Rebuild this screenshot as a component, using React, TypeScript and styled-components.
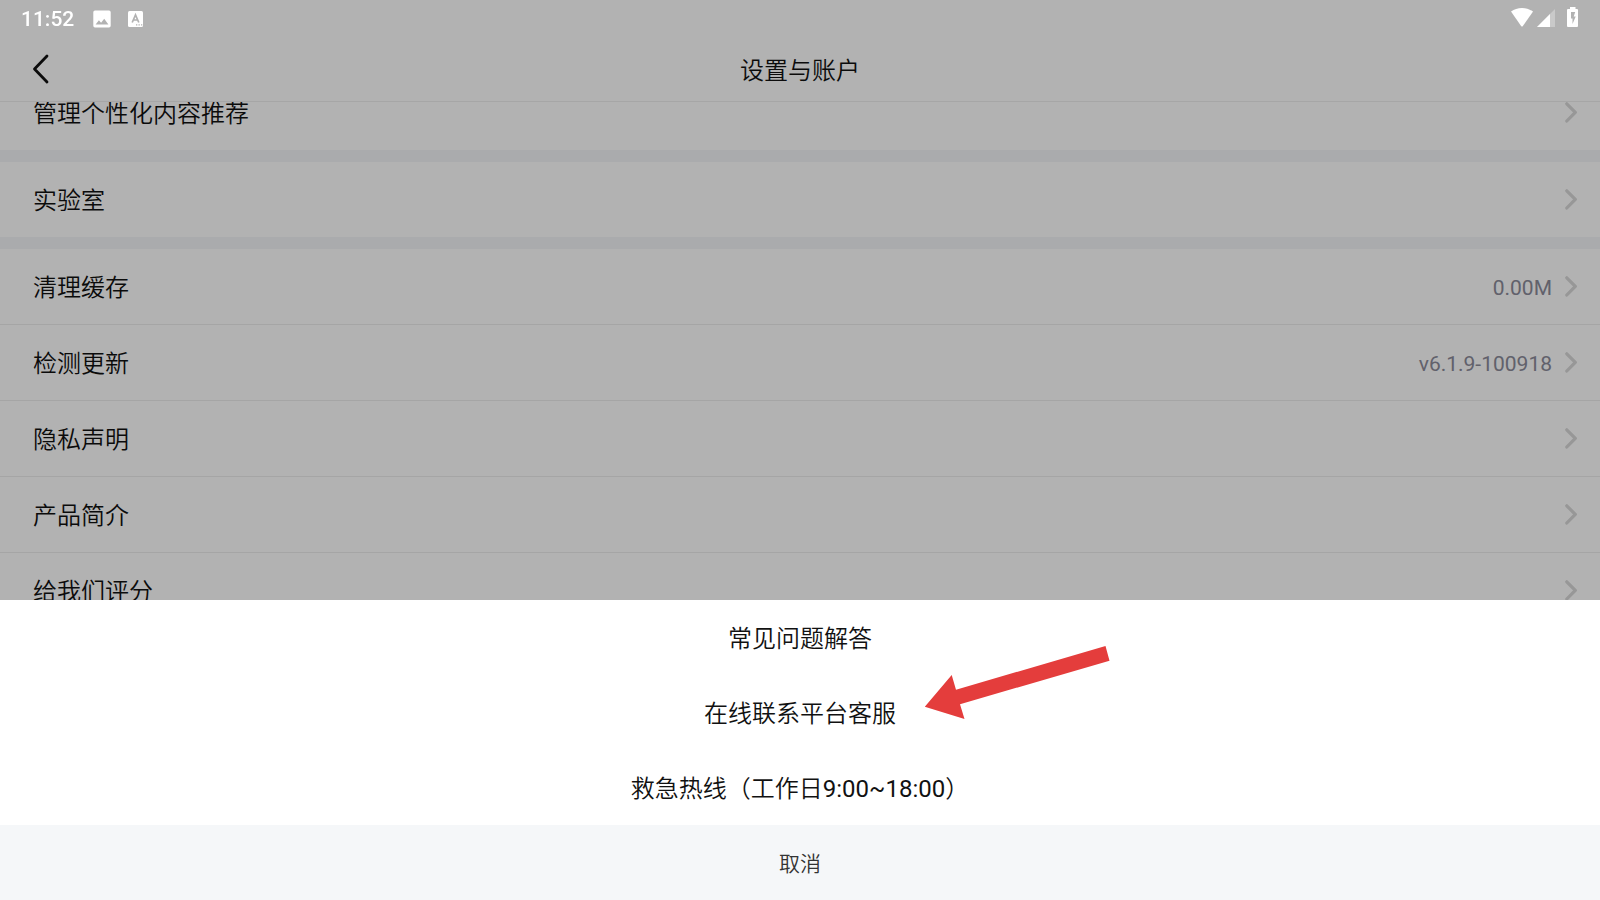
import React, { useLayoutEffect, useRef } from "react";
import styled, { createGlobalStyle } from "styled-components";

const GlobalStyle = createGlobalStyle`
  * { box-sizing: border-box; }
  body {
    margin: 0;
    background: #ffffff;
    color: #111111;
    font-family: Roboto, "Noto Sans CJK SC", sans-serif;
    font-weight: 350;
  }
  button {
    margin: 0;
    padding: 0;
    border: 0;
    background: none;
    color: inherit;
    font: inherit;
    cursor: pointer;
  }
`;

const Screen = styled.div`
  display: flex;
  flex-direction: column;
  height: 100vh;
  overflow: hidden;
`;

const StatusBar = styled.div`
  position: relative;
  z-index: 2;
  display: flex;
  justify-content: space-between;
  flex: none;
  height: 36px;
  padding: 0 22px 0 21px;
  color: #ffffff;
`;

const StatusGroup = styled.div`
  display: flex;
  align-items: center;
`;

const Notifications = styled(StatusGroup)`
  padding-top: 2px;
`;

const Indicators = styled(StatusGroup)`
  padding-bottom: 2px;
`;

const Clock = styled.time`
  margin-right: 19px;
  font-size: 21px;
  font-weight: 500;
  line-height: 34px;
`;

const Header = styled.header`
  display: grid;
  grid-template-columns: 1fr auto 1fr;
  align-items: center;
  flex: none;
  height: 66px;
  padding: 0 30px;
  border-bottom: 1px solid #eeeeee;
`;

const BackButton = styled.button`
  display: flex;
  justify-self: start;
`;

const Title = styled.h1`
  margin: 0;
  padding-top: 4px;
  font-size: 24px;
  font-weight: 350;
  line-height: 36px;
`;

const ScrollArea = styled.main`
  flex: 1;
  min-height: 0;
  padding-bottom: 300px;
  overflow-y: auto;
  scrollbar-width: none;
`;

const Group = styled.section`
  & + & {
    border-top: 12px solid #f4f5f8;
  }
`;

const Row = styled.button`
  display: flex;
  align-items: center;
  width: 100%;
  height: 75px;
  padding: 2px 22px 0 33px;
  text-align: left;
`;

const Divider = styled.hr`
  height: 1px;
  margin: 0;
  border: 0;
  background: #ececec;
`;

const RowLabel = styled.span`
  flex: 1;
  font-size: 24px;
  line-height: 36px;
`;

const RowValue = styled.span`
  margin-right: 13px;
  color: #8b8b9a;
  font-size: 21px;
  font-weight: 400;
  line-height: 36px;
`;

const Mask = styled.div`
  position: fixed;
  inset: 0;
  z-index: 1;
  background: rgba(0, 0, 0, 0.3);
`;

const Sheet = styled.div`
  position: fixed;
  right: 0;
  bottom: 0;
  left: 0;
  z-index: 3;
  display: flex;
  flex-direction: column;
  background: #ffffff;
`;

const SheetOption = styled.button<{ $cancel?: boolean }>`
  height: 75px;
  padding-top: 2px;
  background: ${(p) => (p.$cancel ? "#f5f7f9" : "#ffffff")};
  color: ${(p) => (p.$cancel ? "#333333" : "#111111")};
  font-size: ${(p) => (p.$cancel ? 21 : 24)}px;
  line-height: 36px;
`;

const Hours = styled.span`
  font-weight: 400;
`;

const Pointer = styled.svg`
  position: absolute;
  top: 46px;
  left: calc(50% + 124px);
  pointer-events: none;
`;

const StatusIcon = styled.svg<{ $gap?: number }>`
  margin-left: ${(p) => p.$gap ?? 0}px;
`;

const Chevron = () => (
  <svg width="13" height="24" viewBox="0 0 13 24" fill="none" aria-hidden="true">
    <path d="M1.800 1.800 10.300 10.400 1.800 19" stroke="#d8d8d8" strokeWidth="3.2" strokeLinecap="round" strokeLinejoin="round" />
  </svg>
);

type Item = { label: string; value?: string };

const groups: Item[][] = [
  [{ label: "管理个性化内容推荐" }],
  [{ label: "实验室" }],
  [
    { label: "清理缓存", value: "0.00M" },
    { label: "检测更新", value: "v6.1.9-100918" },
    { label: "隐私声明" },
    { label: "产品简介" },
    { label: "给我们评分" },
  ],
];

const INITIAL_SCROLL = 27;

export default function App() {
  const area = useRef<HTMLElement>(null);

  useLayoutEffect(() => {
    if (area.current) area.current.scrollTop = INITIAL_SCROLL;
  }, []);

  return (
    <Screen>
      <GlobalStyle />
      <StatusBar>
        <Notifications>
          <Clock>11:52</Clock>
          <StatusIcon width="18" height="18" viewBox="0 0 18 18" aria-hidden="true">
            <path
              fill="currentColor"
              fillRule="evenodd"
              d="M2 .5h14a1.7 1.7 0 0 1 1.7 1.7v13.6a1.7 1.7 0 0 1-1.7 1.7H2a1.7 1.7 0 0 1-1.7-1.7V2.2A1.7 1.7 0 0 1 2 .5ZM2.600 14.400h12.800l-4.200-5.700-3.100 4.100-2.200-2.600Z"
            />
          </StatusIcon>
          <StatusIcon $gap={17} width="15" height="16" viewBox="0 0 15 16" aria-hidden="true">
            <rect width="15" height="16" rx="1.5" fill="currentColor" />
            <path d="M4.200 11.500 7.500 3.800l3.300 7.700M5.300 9h4.400" fill="none" stroke="#b2b2b2" strokeWidth="1.7" />
            <path d="M8 13.300h1.300v1.300H8zM10.500 13.300h1.300v1.300h-1.300zM13 13.300h1.300v1.300H13z" fill="#b2b2b2" />
          </StatusIcon>
        </Notifications>
        <Indicators>
          <StatusIcon width="22" height="20" viewBox="0 0 22 20" aria-hidden="true">
            <path d="M0 4.600C3.200 2.200 6.800 1 11 1s7.800 1.200 11 3.600L11.900 19q-.9 1-1.800 0Z" fill="currentColor" />
          </StatusIcon>
          <StatusIcon $gap={4} width="18" height="20" viewBox="0 0 18 20" aria-hidden="true">
            <path d="M18 2v18H0Z" fill="currentColor" opacity="0.3" />
            <path d="M13 7v13H0Z" fill="currentColor" />
          </StatusIcon>
          <StatusIcon $gap={12} width="11" height="20" viewBox="0 0 11 20" aria-hidden="true">
            <path
              fill="currentColor"
              fillRule="evenodd"
              d="M3 0h5.500v2H10q1 0 1 1v16q0 1-1 1H1q-1 0-1-1V3q0-1 1-1h2ZM4 5v6.500h1.500V17l3.200-7.500H6.700L8.200 5Z"
            />
          </StatusIcon>
        </Indicators>
      </StatusBar>
      <Header>
        <BackButton aria-label="返回">
          <svg width="22" height="32" viewBox="0 0 22 32" fill="none" aria-hidden="true">
            <path d="M17 3 4.500 16 17 29" stroke="#111" strokeWidth="2.8" strokeLinecap="round" strokeLinejoin="round" />
          </svg>
        </BackButton>
        <Title>设置与账户</Title>
      </Header>
      <ScrollArea ref={area}>
        {groups.map((items) => (
          <Group key={items[0].label}>
            {items.map((item, i) => (
              <React.Fragment key={item.label}>
                {i > 0 && <Divider />}
                <Row>
                  <RowLabel>{item.label}</RowLabel>
                  {item.value && <RowValue>{item.value}</RowValue>}
                  <Chevron />
                </Row>
              </React.Fragment>
            ))}
          </Group>
        ))}
      </ScrollArea>
      <Mask />
      <Sheet role="dialog" aria-label="联系客服">
        <SheetOption>常见问题解答</SheetOption>
        <SheetOption>在线联系平台客服</SheetOption>
        <SheetOption>
          救急热线（工作日<Hours>9:00~18:00</Hours>）
        </SheetOption>
        <SheetOption $cancel>取消</SheetOption>
        <Pointer width="186" height="75" viewBox="0 0 186 75" aria-hidden="true">
          <path d="M.8 60.800 27.700 29 32 43.700 181.500 0 185.500 14.700 36 58.200 40.500 73Z" fill="#e43d3c" />
        </Pointer>
      </Sheet>
    </Screen>
  );
}
